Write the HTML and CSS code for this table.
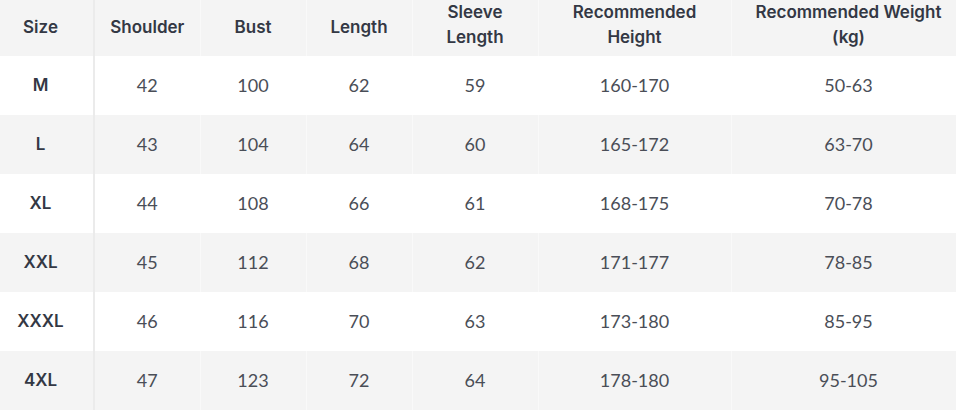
FILE: index.html
```html
<!DOCTYPE html>
<html>
<head>
<meta charset="utf-8">
<link rel="stylesheet" href="styles.css">
</head>
<body>
<div class="wrap">
<table class="size-table">
  <colgroup>
    <col class="c-size"><col class="c-sh"><col class="c-bust"><col class="c-len"><col class="c-slv"><col class="c-rh"><col class="c-rw">
  </colgroup>
  <thead>
    <tr><th class="first">Size</th><th>Shoulder</th><th>Bust</th><th>Length</th><th class="two">Sleeve<br>Length</th><th class="two">Recommended<br>Height</th><th class="two">Recommended Weight<br>(kg)</th></tr>
  </thead>
  <tbody>
    <tr><td class="first">M</td><td>42</td><td>100</td><td>62</td><td>59</td><td>160-170</td><td>50-63</td></tr>
    <tr><td class="first">L</td><td>43</td><td>104</td><td>64</td><td>60</td><td>165-172</td><td>63-70</td></tr>
    <tr><td class="first">XL</td><td>44</td><td>108</td><td>66</td><td>61</td><td>168-175</td><td>70-78</td></tr>
    <tr><td class="first">XXL</td><td>45</td><td>112</td><td>68</td><td>62</td><td>171-177</td><td>78-85</td></tr>
    <tr><td class="first">XXXL</td><td>46</td><td>116</td><td>70</td><td>63</td><td>173-180</td><td>85-95</td></tr>
    <tr><td class="first">4XL</td><td>47</td><td>123</td><td>72</td><td>64</td><td>178-180</td><td>95-105</td></tr>
  </tbody>
</table>
</div>
</body>
</html>
```

FILE: styles.css
```css
html, body {
  margin: 0;
  padding: 0;
  background: #ffffff;
}
.wrap {
  width: 956px;
  overflow: hidden;
}
.size-table {
  width: 966px;
  table-layout: fixed;
  border-collapse: collapse;
  font-family: Lato, "Liberation Sans", sans-serif;
  font-size: 18px;
  color: #4a4e57;
}
.c-size { width: 94px; }
.c-sh { width: 106px; }
.c-bust { width: 106px; }
.c-len { width: 106px; }
.c-slv { width: 126px; }
.c-rh { width: 193px; }
.c-rw { width: 235px; }
.size-table th,
.size-table td {
  text-align: center;
  padding: 0;
  border-right: 1px solid #f9f9f9;
}
.size-table th {
  height: 54px;
  padding-bottom: 2px;
  font-family: Inter, Lato, sans-serif;
  font-size: 17px;
  font-weight: 600;
  color: #333844;
  line-height: 26px;
  background: #f4f4f4;
}
.size-table th.two {
  height: 50px;
  padding-bottom: 6px;
  line-height: 25px;
}
.size-table td {
  height: 57px;
  padding-bottom: 2px;
}
.size-table tbody tr:nth-child(even) td {
  background: #f4f4f4;
}
.size-table tbody tr:nth-child(odd) td {
  border-right-color: #ffffff;
}
.size-table .first {
  border-right: 2px solid #ebebeb;
  font-family: Inter, Lato, sans-serif;
  font-size: 17px;
  font-weight: 600;
  color: #333844;
  padding-right: 12px;
}
.size-table tbody tr td.first {
  border-right-color: #ebebeb;
}
```
